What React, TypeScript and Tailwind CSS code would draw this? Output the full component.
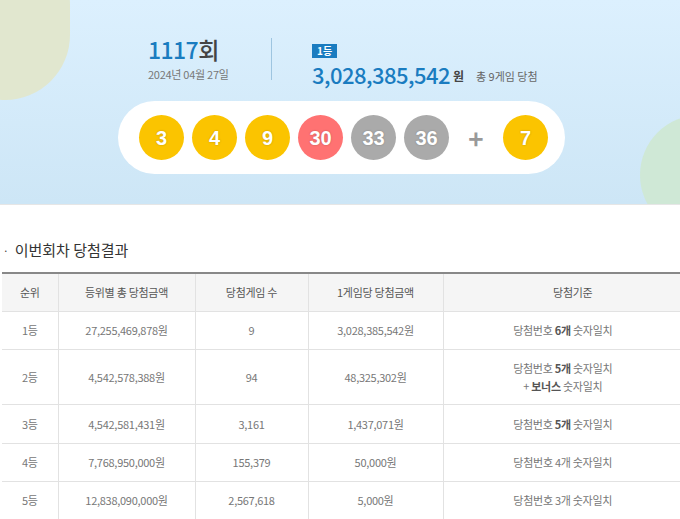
export default function App() {
  const balls = [
    { n: 3, c: 'bg-[#fbc400]' },
    { n: 4, c: 'bg-[#fbc400]' },
    { n: 9, c: 'bg-[#fbc400]' },
    { n: 30, c: 'bg-[#ff7272]' },
    { n: 33, c: 'bg-[#aaaaaa]' },
    { n: 36, c: 'bg-[#aaaaaa]' },
  ];
  const rows = [
    ['1등', '27,255,469,878원', '9', '3,028,385,542원', <>당첨번호 <b className="text-[#555]">6개</b> 숫자일치</>],
    ['2등', '4,542,578,388원', '94', '48,325,302원', <>당첨번호 <b className="text-[#555]">5개</b> 숫자일치<br />+ <b className="text-[#555]">보너스</b> 숫자일치</>],
    ['3등', '4,542,581,431원', '3,161', '1,437,071원', <>당첨번호 <b className="text-[#555]">5개</b> 숫자일치</>],
    ['4등', '7,768,950,000원', '155,379', '50,000원', <>당첨번호 4개 숫자일치</>],
    ['5등', '12,838,090,000원', '2,567,618', '5,000원', <>당첨번호 3개 숫자일치</>],
  ];
  const heights = ['h-[38px]', 'h-[55px]', 'h-[39px]', 'h-[38px]', 'h-[38px]'];
  return (
    <div className="w-[680px] h-[519px] overflow-hidden bg-white text-[#666]" style={{ fontFamily: '"Noto Sans CJK KR", "Noto Sans", sans-serif' }}>
      <div className="relative h-[205px] overflow-hidden bg-gradient-to-b from-[#dcf0fe] to-[#cde6f6] border-b border-[#e6e6e6]">
        <div className="absolute -left-[60px] -top-[60px] w-[130px] h-[160px] rounded-full bg-[#e1e7cf]" />
        <div className="absolute left-[640px] top-[115px] w-[120px] h-[120px] rounded-full bg-[#cfe8d6]" />
        <div className="relative flex pt-[36px] pl-[148px]">
          <div className="w-[123px]">
            <div className="text-[23px] leading-[26px] tracking-tight font-medium"><span className="text-[#1a7cc0]">1117</span><span className="text-[#444]">회</span></div>
            <div className="text-[11px] text-[#777] mt-[4px] tracking-tight">2024년 04월 27일</div>
          </div>
          <div className="w-px h-[42px] bg-[#9ec5e0] mt-[2px]" />
          <div className="pl-[40px]">
            <div className="inline-block bg-[#1a7cc0] text-white text-[10px] leading-[14px] px-[5px] font-bold">1등</div>
            <div className="flex items-end mt-[1px]">
              <span className="text-[22px] leading-[26px] text-[#1a7cc0] tracking-tight font-medium">3,028,385,542</span>
              <span className="text-[12px] text-[#444] ml-[3px] mb-[2px] font-bold">원</span>
              <span className="text-[11px] text-[#666] ml-[12px] mb-[3px]">총 9게임 당첨</span>
            </div>
          </div>
        </div>
        <div className="relative ml-[118px] mt-[14px] w-[447px] h-[73px] rounded-full bg-white flex items-center pl-[21px] gap-[8px]">
          {balls.map((b) => (
            <div key={b.n} className={`w-[45px] h-[45px] rounded-full ${b.c} flex items-center justify-center text-white text-[20px] font-bold`} style={{ fontFamily: '"Liberation Sans", sans-serif', textShadow: '0 0 2px rgba(0,0,0,0.25)' }}>{b.n}</div>
          ))}
          <div className="w-[38px] text-center text-[#999] text-[26px] font-bold">+</div>
          <div className="w-[45px] h-[45px] rounded-full bg-[#fbc400] flex items-center justify-center text-white text-[20px] font-bold" style={{ fontFamily: '"Liberation Sans", sans-serif', textShadow: '0 0 2px rgba(0,0,0,0.25)' }}>7</div>
        </div>
      </div>
      <div className="h-[30px]" />
      <div className="flex items-center pl-[3px] text-[15px] text-[#333] h-[30px]">
        <span className="text-[10px] mr-[6px]">·</span>이번회차 당첨결과
      </div>
      <div className="h-[7px]" />
      <table className="ml-[2px] w-[700px] border-t-2 border-[#888] border-collapse text-[11px] text-center tracking-tight">
        <thead>
          <tr className="h-[38px] bg-[#f5f5f5] text-[#555]">
            {['순위', '등위별 총 당첨금액', '당첨게임 수', '1게임당 당첨금액', '당첨기준'].map((h, i) => (
              <th key={h} className={`font-normal border-l border-b border-[#e2e2e2] first:border-l-0 ${['w-[56px]', 'w-[137px]', 'w-[113px]', 'w-[135px]', ''][i]}`}>{h}</th>
            ))}
          </tr>
        </thead>
        <tbody>
          {rows.map((r, i) => (
            <tr key={i} className={heights[i]}>
              {r.map((c, j) => (
                <td key={j} className={`border-l border-b border-[#e2e2e2] first:border-l-0 text-[#777] leading-[18px] ${j === 4 ? 'pr-[20px]' : ''}`}>{c}</td>
              ))}
            </tr>
          ))}
        </tbody>
      </table>
    </div>
  );
}
